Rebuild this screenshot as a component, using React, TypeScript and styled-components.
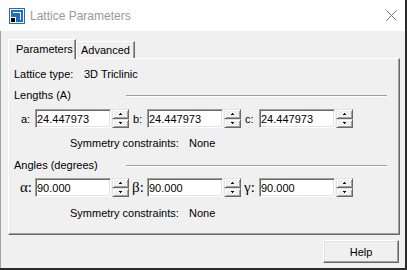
import styled, { createGlobalStyle } from 'styled-components'

const GlobalStyle = createGlobalStyle`
  html, body {
    margin: 0;
    padding: 0;
    background: #2b2b2b;
  }
  body {
    font-family: 'Liberation Sans', Arial, sans-serif;
    font-size: 11px;
    color: #000;
  }
  * {
    box-sizing: border-box;
  }
`

const lengths = [
  { label: 'a:', value: '24.447973' },
  { label: 'b:', value: '24.447973' },
  { label: 'c:', value: '24.447973' }
]

const angles = [
  { label: 'α:', value: '90.000' },
  { label: 'β:', value: '90.000' },
  { label: 'γ:', value: '90.000' }
]

export default function App() {
  return (
    <>
      <GlobalStyle />
      <Window>
        <TitleBar>
          <AppIcon />
          <Title>Lattice Parameters</Title>
          <CloseButton>
            <svg width="11" height="11" viewBox="0 0 11 11">
              <path d="M0.5 0.5L10.5 10.5M10.5 0.5L0.5 10.5" stroke="#707070" strokeWidth="1" />
            </svg>
          </CloseButton>
        </TitleBar>

        <Body>
          <Tabs>
            <Tab $active>Parameters</Tab>
            <Tab>Advanced</Tab>
          </Tabs>

          <Panel>
            <InfoRow $mt={9}>
              <span>Lattice type:</span>
              <span>3D Triclinic</span>
            </InfoRow>

            <SectionHeader $mt={8}>
              <span>Lengths (A)</span>
              <Rule />
            </SectionHeader>

            <FieldRow $mt={7}>
              {lengths.map((f) => (
                <Field key={f.label}>
                  <FieldLabel>{f.label}</FieldLabel>
                  <TextBox readOnly value={f.value} />
                  <Spinner />
                </Field>
              ))}
            </FieldRow>

            <SymmetryRow $mt={9}>
              <span>Symmetry constraints:</span>
              <span>None</span>
            </SymmetryRow>

            <SectionHeader $mt={9}>
              <span>Angles (degrees)</span>
              <Rule />
            </SectionHeader>

            <FieldRow $mt={6}>
              {angles.map((f) => (
                <Field key={f.label}>
                  <GreekLabel>{f.label}</GreekLabel>
                  <TextBox readOnly value={f.value} />
                  <Spinner />
                </Field>
              ))}
            </FieldRow>

            <SymmetryRow $mt={10}>
              <span>Symmetry constraints:</span>
              <span>None</span>
            </SymmetryRow>
          </Panel>

          <PushButton>Help</PushButton>
        </Body>
      </Window>
    </>
  )
}

function AppIcon() {
  return (
    <svg width="16" height="16" viewBox="0 0 16 16" shapeRendering="crispEdges">
      <rect x="0" y="0" width="16" height="16" fill="#1b6ec2" />
      <rect x="1" y="1" width="14" height="14" fill="#fff" />
      <rect x="2" y="2" width="12" height="12" fill="#1b6ec2" />
      <path d="M4 4h8v8h-1v-7h-7z" fill="#fff" />
      <rect x="2" y="9" width="5" height="5" fill="#fff" />
      <rect x="2" y="10" width="4" height="4" fill="#000" />
    </svg>
  )
}

function Spinner() {
  return (
    <SpinBox>
      <SpinButton>
        <svg width="3" height="2" viewBox="0 0 3 2" shapeRendering="crispEdges">
          <rect x="1" y="0" width="1" height="1" fill="#000" />
          <rect x="0" y="1" width="3" height="1" fill="#000" />
        </svg>
      </SpinButton>
      <SpinButton>
        <svg width="3" height="2" viewBox="0 0 3 2" shapeRendering="crispEdges">
          <rect x="0" y="0" width="3" height="1" fill="#000" />
          <rect x="1" y="1" width="1" height="1" fill="#000" />
        </svg>
      </SpinButton>
    </SpinBox>
  )
}

const Window = styled.div`
  width: 405px;
  height: 268px;
  display: flex;
  flex-direction: column;
  background: #f0f0f0;
  overflow: hidden;
`

const TitleBar = styled.div`
  height: 31px;
  flex: none;
  display: flex;
  align-items: center;
  padding-left: 9px;
  background: #fff;
`

const Title = styled.span`
  margin-left: 5px;
  font-size: 12px;
  color: #999;
`

const CloseButton = styled.div`
  margin-left: auto;
  margin-right: 8px;
  width: 11px;
  height: 11px;
  display: flex;
`

const Body = styled.div`
  flex: 1;
  display: flex;
  flex-direction: column;
  border-left: 1px solid #a0a0a0;
  padding: 8px 5px 5px 7px;
`

const Tabs = styled.div`
  height: 19px;
  display: flex;
  align-items: flex-end;
`

const Tab = styled.div<{ $active?: boolean }>`
  position: relative;
  z-index: 1;
  width: ${(p) => (p.$active ? '68px' : '59px')};
  height: ${(p) => (p.$active ? '20px' : '17px')};
  margin-bottom: ${(p) => (p.$active ? '-1px' : '0')};
  padding-left: ${(p) => (p.$active ? '7px' : '4px')};
  padding-top: ${(p) => (p.$active ? '2px' : '1px')};
  line-height: 14px;
  background: #f0f0f0;
  border-top: 1px solid #fff;
  border-left: 1px solid #fff;
  border-right: 1px solid #696969;
  box-shadow: inset -1px 0 #a0a0a0;
`

const Panel = styled.div`
  height: 177px;
  flex: none;
  display: flex;
  flex-direction: column;
  padding-left: 5px;
  border-top: 1px solid #fff;
  border-left: 1px solid #fff;
  border-right: 1px solid #696969;
  border-bottom: 1px solid #696969;
  box-shadow: inset -1px -1px #a0a0a0;
`

const InfoRow = styled.div<{ $mt: number }>`
  margin-top: ${(p) => p.$mt}px;
  height: 13px;
  line-height: 13px;
  display: grid;
  grid-template-columns: 70px auto;
`

const SymmetryRow = styled(InfoRow)`
  padding-left: 56px;
  grid-template-columns: 119px auto;
`

const SectionHeader = styled.div<{ $mt: number }>`
  margin-top: ${(p) => p.$mt}px;
  height: 13px;
  line-height: 13px;
  display: grid;
  grid-template-columns: 112px 1fr;
  align-items: center;
  padding-right: 12px;
`

const Rule = styled.div`
  height: 2px;
  border-top: 1px solid #a0a0a0;
  border-bottom: 1px solid #fff;
`

const FieldRow = styled.div<{ $mt: number }>`
  margin-top: ${(p) => p.$mt}px;
  margin-left: 6px;
  display: flex;
  gap: 3px;
`

const Field = styled.div`
  display: flex;
  align-items: center;
  gap: 1px;
  height: 19px;
`

const FieldLabel = styled.span`
  width: 14px;
  padding-left: 1px;
`

const GreekLabel = styled.span`
  width: 14px;
  font-family: 'Liberation Serif', 'DejaVu Serif', serif;
  font-size: 15px;
  line-height: 19px;
`

const TextBox = styled.input`
  width: 76px;
  height: 19px;
  margin: 0;
  padding: 0 0 0 1px;
  font-family: 'Liberation Sans', Arial, sans-serif;
  font-size: 11px;
  color: #000;
  background: #fff;
  border: 1px solid;
  border-color: #a0a0a0 #fff #fff #a0a0a0;
  box-shadow: inset 1px 1px #696969, inset -1px -1px #e3e3e3;
  outline: none;
`

const SpinBox = styled.div`
  width: 17px;
  height: 19px;
  display: flex;
  flex-direction: column;
`

const SpinButton = styled.div`
  flex: 1;
  display: flex;
  align-items: center;
  justify-content: center;
  background: #f0f0f0;
  border: 1px solid;
  border-color: #e3e3e3 #696969 #696969 #e3e3e3;
  box-shadow: inset 1px 1px #fff, inset -1px -1px #a0a0a0;
`

const PushButton = styled.div`
  align-self: flex-end;
  margin-top: 5px;
  margin-right: 1px;
  width: 76px;
  height: 23px;
  display: flex;
  align-items: center;
  justify-content: center;
  font-size: 11px;
  background: #f0f0f0;
  border: 1px solid;
  border-color: #fff #696969 #696969 #fff;
  box-shadow: inset -1px -1px #a0a0a0, inset 1px 1px #e3e3e3;
`
